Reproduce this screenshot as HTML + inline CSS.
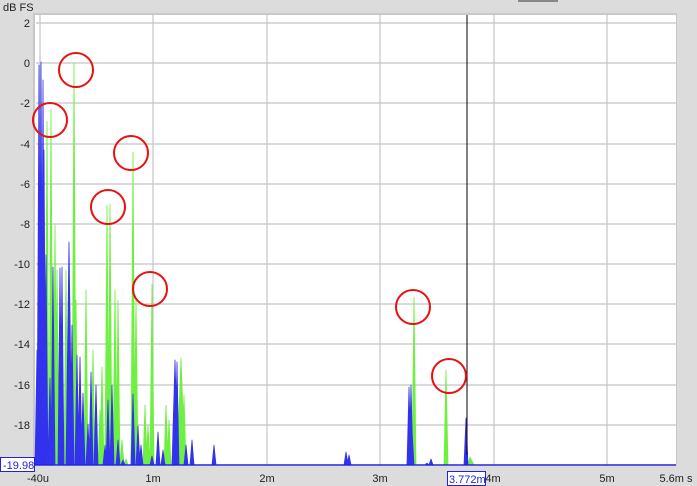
<!DOCTYPE html>
<html><head><meta charset="utf-8"><style>
html,body{margin:0;padding:0;background:#dcdcdc;}
svg{display:block;font-family:"Liberation Sans",sans-serif;}
</style></head><body>
<svg width="697" height="486" viewBox="0 0 697 486" xmlns="http://www.w3.org/2000/svg">
<rect width="697" height="486" fill="#dcdcdc"/>
<rect x="518" y="0" width="40" height="2" fill="#888"/>
<rect x="33" y="13" width="644" height="453" fill="#c8c8c8"/>
<rect x="35" y="15" width="641" height="451" fill="#ffffff"/>
<g stroke="#c4c4c4" stroke-width="1.2">
<line x1="36" y1="23" x2="676" y2="23"/><line x1="36" y1="63" x2="676" y2="63"/>
<line x1="36" y1="103" x2="676" y2="103"/><line x1="36" y1="144" x2="676" y2="144"/>
<line x1="36" y1="184" x2="676" y2="184"/><line x1="36" y1="224" x2="676" y2="224"/>
<line x1="36" y1="264" x2="676" y2="264"/><line x1="36" y1="304" x2="676" y2="304"/>
<line x1="36" y1="344" x2="676" y2="344"/><line x1="36" y1="385" x2="676" y2="385"/>
<line x1="36" y1="425" x2="676" y2="425"/>
<line x1="40" y1="15" x2="40" y2="465"/><line x1="153" y1="15" x2="153" y2="465"/>
<line x1="267" y1="15" x2="267" y2="465"/><line x1="380" y1="15" x2="380" y2="465"/>
<line x1="494" y1="15" x2="494" y2="465"/><line x1="607" y1="15" x2="607" y2="465"/>
</g>
<g fill="#222" font-size="11" text-anchor="end">
<text x="30" y="27">2</text><text x="30" y="67">0</text><text x="30" y="107">-2</text>
<text x="30" y="148">-4</text><text x="30" y="188">-6</text><text x="30" y="228">-8</text>
<text x="30" y="268">-10</text><text x="30" y="308">-12</text><text x="30" y="348">-14</text>
<text x="30" y="389">-16</text><text x="30" y="429">-18</text>
</g>
<text x="3" y="11" font-size="11" fill="#222">dB FS</text>
<g fill="#222" font-size="11" text-anchor="middle">
<text x="38" y="482">-40u</text><text x="153" y="482">1m</text><text x="267" y="482">2m</text>
<text x="380" y="482">3m</text><text x="493" y="482">4m</text><text x="607" y="482">5m</text>
<text x="676" y="482">5.6m s</text>
</g>
<path fill="#6ef040" stroke="#6ef040" stroke-width="0.8" stroke-linejoin="round" d="
M36 465L38 330L40 465Z M39 465L41 300L43 465Z M45 465L47 121L49 465Z M49 465L51 109L53 465Z
M53 465L55 225L57 465Z M55 465L57 270L59 465Z M64 465L66 270L68 465Z M72 465L74 63L76 465Z
M74 465L76 300L78 465Z M81 465L83 400L85 465Z M84 465L86 290L88 465Z M91 465L93 350L95 465Z
M94 465L96 430L98 465Z M98 465L100 410L102 465Z M100 465L102 367L104 465Z M105 465L107 205L109 465Z
M108 465L110 204L112 465Z M113 465L115 290L117 465Z M116 465L118 300L120 465Z M120 465L122 440L124 465Z
M124 465L126 459L128 465Z M131 465L133 152L135 465Z M134 465L136 300L138 465Z M143 465L145 405L147 465Z
M146 465L148 425L150 465Z M150 465L152 284L154 465Z M164 465L166 405L168 465Z M167 465L169 420L171 465Z
M177 465L181 358L185 465Z M182 465L184 395L186 465Z M412 465L414 297L416 465Z M444 465L446 370L448 465Z
M468 465L470 457L474 465Z"/>
<path fill="#3333ee" stroke="#3333ee" stroke-width="0.8" stroke-linejoin="round" d="
M35 465L37 350L39 465Z M37 465L39 65L41 465Z M39 465L41 62L43 465Z M41 465L43 80L45 465Z
M42 465L44 150L46 465Z M44 465L46 255L48 465Z M48 465L50 378L52 465Z M51 465L53 267L55 465Z
M58 465L60 268L62 465Z M60 465L62 267L64 465Z M66 465L69 242L72 465Z M70 465L72 325L74 465Z
M75 465L77 355L79 465Z M78 465L80 357L82 465Z M81 465L83 393L85 465Z M86 465L88 424L90 465Z
M89 465L91 372L93 465Z M94 465L96 385L98 465Z M103 465L105 445L107 465Z M106 465L108 400L110 465Z
M110 465L112 385L114 465Z M116 465L118 440L120 465Z M121 465L123 460L125 465Z M131 465L133 394L135 465Z
M136 465L138 426L140 465Z M139 465L141 445L143 465Z M150 465L152 456L154 465Z M156 465L158 432L160 465Z
M161 465L163 450L165 465Z M172 465L175 360L178 465Z M175 465L177 362L179 465Z M184 465L186 445L188 465Z
M190 465L192 440L194 465Z M212 465L214 445L216 465Z M344 465L346 452L348 465Z M347 465L349 455L351 465Z
M407 465L409 387L411 465Z M409 465L411 385L413 465Z M410 465L412 429L414 465Z M425 465L427 463L429 465Z
M429 465L431 459L433 465Z M464 465L466 418L468 465Z"/>
<line x1="467" y1="15" x2="467" y2="455" stroke="#000" stroke-width="1"/>
<line x1="467" y1="455" x2="467" y2="465" stroke="#2222dd" stroke-width="1"/>
<line x1="35" y1="465" x2="676" y2="465" stroke="#2222dd" stroke-width="1.5"/>
<g fill="none" stroke="#e81010" stroke-width="2">
<circle cx="50" cy="120" r="17"/><circle cx="76" cy="70" r="17"/>
<circle cx="131" cy="153" r="17"/><circle cx="108" cy="207" r="17"/>
<circle cx="150" cy="289" r="17"/><circle cx="413" cy="307" r="17"/>
<circle cx="449" cy="376" r="17"/>
</g>
<rect x="0.5" y="457.5" width="34" height="14" fill="#fff" stroke="#2222dd"/>
<text x="3" y="469" font-size="11" fill="#2222dd">-19.98</text>
<rect x="447.5" y="471.5" width="38" height="14" fill="#fff" stroke="#2222dd"/>
<text x="449" y="483" font-size="11" fill="#2222dd">3.772m</text>
</svg>
</body></html>
